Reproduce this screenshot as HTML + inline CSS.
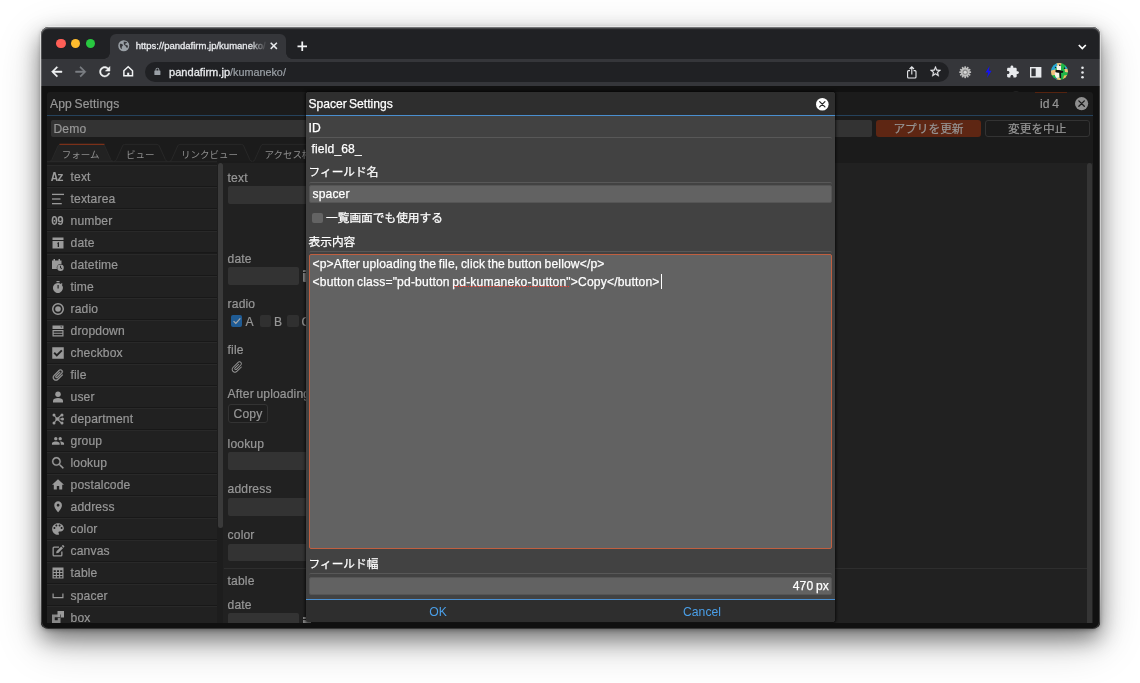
<!DOCTYPE html>
<html lang="ja">
<head>
<meta charset="utf-8">
<title>kumaneko - Spacer Settings</title>
<style>
*{box-sizing:border-box;margin:0;padding:0}
html,body{width:1140px;height:683px;overflow:hidden;background:#fff}
body{position:relative;font-family:"Liberation Sans","Noto Sans CJK JP",sans-serif;font-size:12.2px;color:#9a9a9a;line-height:1}
.abs{position:absolute}
#win{position:absolute;left:40.5px;top:27px;width:1059px;height:601.5px;border-radius:7.5px;background:#111;
 box-shadow:0 10px 22px rgba(0,0,0,.45),0 14px 45px rgba(0,0,0,.22),0 1px 4px rgba(0,0,0,.3)}
#win:before{content:"";position:absolute;left:-1px;top:-1px;right:-1px;bottom:-1px;border-radius:8.5px;border:1px solid rgba(255,255,255,.5);-webkit-mask-image:linear-gradient(#000 90%,rgba(0,0,0,0) 99%)}
#win .in{position:absolute;left:-40.5px;top:-27px;width:1140px;height:683px;will-change:transform}
/* chrome */
#tabstrip{left:40.5px;top:27px;width:1059px;height:32px;background:#202124;border-radius:7.5px 7.5px 0 0}
#toolbar{left:40.5px;top:58.7px;width:1059px;height:27.3px;background:#35363a}
#tab{left:109.6px;top:33.7px;width:176px;height:26px;background:#35363a;border-radius:6px 6px 0 0}
#tab:before,#tab:after{content:"";position:absolute;bottom:1px;width:6px;height:6px;background:radial-gradient(circle at 0 0,rgba(0,0,0,0) 5.5px,#35363a 6px)}
#tab:before{left:-6px}
#tab:after{right:-6px;background:radial-gradient(circle at 100% 0,rgba(0,0,0,0) 5.5px,#35363a 6px)}
.tl{width:9.6px;height:9.6px;border-radius:50%;top:38.8px}
#url{left:144.5px;top:61.9px;width:804.5px;height:20.2px;border-radius:10.1px;background:#202124}
.ct{color:#e8eaed;white-space:nowrap;-webkit-text-stroke:0.3px #e8eaed}
svg{display:block;overflow:visible}
/* page */
#page{left:40.5px;top:86px;width:1059px;height:537px;background:#111}
#panel{left:47px;top:92px;width:1046.200px;height:531px;background:#1b1b1b;border-radius:3px 3px 0 0}
.row{left:47px;width:170px;height:22.05px;background:#212121;border-top:1px solid #292929;border-bottom:1px solid #181818}
.row span{position:absolute;left:23.5px;top:4.3px;font-size:12.1px;letter-spacing:.15px;color:#979797;white-space:nowrap;-webkit-text-stroke:0.2px #979797}
.row svg{position:absolute;left:4.5px;top:4.2px;width:12px;height:12px;fill:#9a9a9a}
.row b{position:absolute;left:4.300px;top:5.600px;font-family:"Liberation Mono",monospace;font-weight:bold;font-size:13.400px;letter-spacing:-1.200px;transform:scaleX(.86);transform-origin:0 0;color:#9a9a9a;line-height:12px}
.lbl{font-size:12.1px;letter-spacing:.14px;word-spacing:-.9px;color:#979797;white-space:nowrap;-webkit-text-stroke:0.2px #979797}
.inp{background:#333;border-radius:2px}
/* modal */
#modal{left:306px;top:92.4px;width:528.5px;height:530px;background:#424242;border-radius:3px;box-shadow:0 0 3px 0.500px rgba(0,0,0,.7)}
.mt{color:#fff;white-space:nowrap;font-size:12.1px;letter-spacing:.14px;word-spacing:-.9px;-webkit-text-stroke:0.25px #fff}
.jp{font-family:"Noto Sans CJK JP","Liberation Sans",sans-serif;}
.mt.jp,.lbl.jp{font-size:11.7px;letter-spacing:0}
.sep{left:308.5px;width:523px;height:4px;border-top:1px solid #585858;border-radius:3px}
.minp{left:308.5px;width:523px;background:#626262;border:1px solid #555;border-radius:2px}
</style>
</head>
<body>
<div id="win"><div class="in">

<!-- browser chrome -->
<div id="tabstrip" class="abs"></div>
<div id="toolbar" class="abs"></div>
<div id="tab" class="abs"></div>
<div class="abs tl" style="left:56.2px;background:#ff5f57"></div>
<div class="abs tl" style="left:70.8px;background:#febc2e"></div>
<div class="abs tl" style="left:85.5px;background:#28c840"></div>
<div id="url" class="abs"></div>
<div class="abs ct" style="left:135.7px;top:41px;font-size:9.5px;width:130px;height:12px;overflow:hidden;-webkit-mask-image:linear-gradient(90deg,#000 114px,rgba(0,0,0,0) 131px)">https://pandafirm.jp/kumaneko/</div>
<div class="abs ct" style="left:169px;top:66.500px;font-size:11.1px">pandafirm.jp<span style="color:#9aa0a6;-webkit-text-stroke:0.2px #9aa0a6;font-size:10.800px">/kumaneko/</span></div>


<!-- toolbar icons -->
<svg class="abs" style="left:49.300px;top:64px" width="15.500" height="15.500" viewBox="0 0 24 24" fill="#f1f3f4" stroke="#f1f3f4" stroke-width=".9"><path d="M20 11H7.830l5.590-5.590L12 4l-8 8 8 8 1.410-1.410L7.830 13H20v-2z"/></svg>
<svg class="abs" style="left:73.300px;top:64px" width="15.500" height="15.500" viewBox="0 0 24 24" fill="#7c7f84" stroke="#7c7f84" stroke-width=".9"><path d="M12 4l-1.410 1.410L16.170 11H4v2h12.170l-5.580 5.590L12 20l8-8z"/></svg>
<svg class="abs" style="left:96.800px;top:64.200px" width="15.500" height="15.500" viewBox="0 0 24 24" fill="#f1f3f4" stroke="#f1f3f4" stroke-width=".8"><path d="M17.650 6.350C16.200 4.900 14.210 4 12 4c-4.420 0-7.990 3.580-7.990 8s3.570 8 7.990 8c3.730 0 6.840-2.550 7.730-6h-2.080c-.82 2.330-3.040 4-5.650 4-3.310 0-6-2.690-6-6s2.690-6 6-6c1.660 0 3.140.69 4.220 1.780L13 11h7V4l-2.350 2.350z"/></svg>
<svg class="abs" style="left:120.800px;top:64.300px" width="14.400" height="14.400" viewBox="0 0 24 24" fill="none" stroke="#f1f3f4" stroke-width="2.500"><path d="M4.800 11.200L12 4.600l7.200 6.600V19.800H4.800z" stroke-linejoin="miter"/><path d="M12 20v-5.500" stroke-width="3.400"/></svg>
<!-- lock -->
<svg class="abs" style="left:153.700px;top:67.400px" width="6.800" height="8.600" viewBox="0 0 18 22" fill="#9aa0a6"><path d="M2.500 9h13a1.500 1.500 0 0 1 1.500 1.500v9a1.500 1.500 0 0 1-1.500 1.500h-13A1.500 1.500 0 0 1 1 19.500v-9A1.500 1.500 0 0 1 2.500 9zM4 9V6.500a5 5 0 0 1 10 0V9h-2.400V6.500a2.600 2.600 0 0 0-5.200 0V9z"/></svg>
<!-- favicon globe -->
<svg class="abs" style="left:118.400px;top:40.300px" width="11.500" height="11.500" viewBox="0 0 24 24"><circle cx="12" cy="12" r="11.500" fill="#9aa0a6"/><path d="M4 8c3-1 5 0 6 2s-1 3-2 4 1 3 0 5c-3-1-5-5-4-11zM12 3c2 1 5 0 7 2-1 2-3 1-4 3s2 3 4 3 2 3 1 5c-2 1-3-1-4-3s-4-2-4-5 0-3 0-5z" fill="#35363a"/></svg>
<!-- tab close -->
<svg class="abs" style="left:270.200px;top:42.300px" width="7.600" height="7.600" viewBox="0 0 7.600 7.600"><path d="M0.700 0.700l6.200 6.200M6.900 0.700L0.700 6.900" stroke="#e8eaed" stroke-width="1.500"/></svg>
<!-- new tab plus -->
<svg class="abs" style="left:296.500px;top:41px" width="10.500" height="10.500" viewBox="0 0 10.500 10.500"><path d="M5.250 0.500v9.500M0.500 5.250h9.500" stroke="#f1f3f4" stroke-width="1.750"/></svg>
<!-- chevron -->
<svg class="abs" style="left:1078.300px;top:43.900px" width="8.600" height="6" viewBox="0 0 8.600 6"><path d="M0.800 1l3.500 3.500L7.800 1" stroke="#fff" stroke-width="1.700" fill="none"/></svg>
<!-- share -->
<svg class="abs" style="left:907.300px;top:65.500px" width="9.600" height="12.500" viewBox="0 0 9.600 12.500" fill="none" stroke="#e8eaed" stroke-width="1.100"><path d="M3 4.600H1.600a1 1 0 0 0-1 1V11a1 1 0 0 0 1 1H8a1 1 0 0 0 1-1V5.600a1 1 0 0 0-1-1H6.600M4.800 8.500V1M2.600 3l2.200-2.200L7 3"/></svg>
<!-- star -->
<svg class="abs" style="left:929.200px;top:65.300px" width="13" height="13" viewBox="0 0 24 24" fill="#e8eaed" stroke="#e8eaed" stroke-width=".6"><path d="M22 9.240l-7.190-.62L12 2 9.190 8.630 2 9.240l5.460 4.730L5.820 21 12 17.270 18.180 21l-1.630-7.030L22 9.240zM12 15.400l-3.760 2.270 1-4.280-3.320-2.880 4.380-.38L12 6.100l1.710 4.040 4.380.38-3.320 2.880 1 4.280L12 15.400z"/></svg>
<!-- gear -->
<svg class="abs" style="left:959.200px;top:65.800px" width="12.400" height="12.400" viewBox="0 0 24 24"><g fill="#bdbdbd"><circle cx="12" cy="12" r="8.500"/><g id="tth"><rect x="10.300" y="0.500" width="3.400" height="23" rx="1"/><rect x="10.300" y="0.500" width="3.400" height="23" rx="1" transform="rotate(30 12 12)"/><rect x="10.300" y="0.500" width="3.400" height="23" rx="1" transform="rotate(60 12 12)"/><rect x="10.300" y="0.500" width="3.400" height="23" rx="1" transform="rotate(90 12 12)"/><rect x="10.300" y="0.500" width="3.400" height="23" rx="1" transform="rotate(120 12 12)"/><rect x="10.300" y="0.500" width="3.400" height="23" rx="1" transform="rotate(150 12 12)"/></g></g><circle cx="12" cy="12" r="5" fill="#8a8a8a"/><circle cx="12" cy="12" r="3" fill="#d8d8d8"/></svg>
<!-- lightning -->
<svg class="abs" style="left:985px;top:66px" width="7" height="12" viewBox="0 0 7 12"><path d="M4.600 0L0.500 6.600h2.700L2 12l4.600-7.200H3.800z" fill="#1414f0"/></svg>
<!-- puzzle -->
<svg class="abs" style="left:1005.500px;top:65.200px" width="13.500" height="13.500" viewBox="0 0 24 24" fill="#e8eaed"><path d="M20.500 11H19V7c0-1.100-.9-2-2-2h-4V3.500C13 2.120 11.880 1 10.500 1S8 2.120 8 3.500V5H4c-1.100 0-1.990.9-1.990 2v3.800H3.500c1.490 0 2.700 1.210 2.700 2.700s-1.210 2.700-2.700 2.700H2V20c0 1.100.9 2 2 2h3.800v-1.500c0-1.490 1.210-2.700 2.700-2.700 1.490 0 2.700 1.210 2.700 2.700V22H17c1.100 0 2-.9 2-2v-4h1.500c1.380 0 2.500-1.120 2.500-2.500S21.880 11 20.500 11z"/></svg>
<!-- side panel -->
<svg class="abs" style="left:1030px;top:66.800px" width="11.400" height="10.600" viewBox="0 0 11.400 10.600"><rect x="0.700" y="0.700" width="10" height="9.200" fill="none" stroke="#e8eaed" stroke-width="1.400"/><rect x="5.700" y="0.700" width="5" height="9.200" fill="#e8eaed"/></svg>
<!-- avatar -->
<svg class="abs" style="left:1050.700px;top:63.400px" width="17" height="17.200" viewBox="0 0 34 34"><defs><clipPath id="avc"><circle cx="17" cy="17" r="17"/></clipPath></defs><g clip-path="url(#avc)"><rect width="34" height="34" fill="#1fb648"/><path d="M0 0h14l-2 6-4 8-8 3z" fill="#2aa5d8"/><path d="M11 0h10l-1 5-7 1z" fill="#f3c07c"/><path d="M0 15l9-2 2 5-3 6-8 1z" fill="#f3c07c"/><path d="M27 12l7-1v8l-6-1z" fill="#f3c07c"/><path d="M26 25l6-1-3 7-5 1z" fill="#f0b860"/><path d="M11 30l8-1 1 5H10z" fill="#f3c07c"/><path d="M6 31l5-2 1 5H7z" fill="#1d6fb0"/><path d="M28 6l4 2 1 4-5-1z" fill="#2aa5d8"/><path d="M11 7c1-3 8-4 9 0l0 8-8 1z" fill="#f7f3ea"/><path d="M8 18l9 0 0 11-6 1c-3-2-4-8-3-12z" fill="#f7f3ea"/><path d="M9 14.500c4-1.500 10 0 15.500 1.500l-.5 3.500c-4 .5-11 0-15-1z" fill="#111"/><path d="M16.500 18.500l3.500 0 .5 12.500-3-1z" fill="#111"/><circle cx="9" cy="8.500" r="1.400" fill="#111"/><circle cx="17.500" cy="4.500" r="1.500" fill="#111"/><circle cx="27" cy="10.500" r="1.500" fill="#111"/></g></svg>
<!-- menu dots -->
<svg class="abs" style="left:1081.200px;top:65.500px" width="3" height="13" viewBox="0 0 3 13" fill="#e8eaed"><circle cx="1.500" cy="1.700" r="1.300"/><circle cx="1.500" cy="6.500" r="1.300"/><circle cx="1.500" cy="11.300" r="1.300"/></svg>

<!-- page -->
<div id="page" class="abs"></div>
<div class="abs" style="left:1012px;top:90.500px;width:8px;height:8px;border-radius:50%;background:#222"></div>
<div id="panel" class="abs"></div>
<div class="abs" style="left:1034.500px;top:91.500px;width:32.500px;height:1px;background:#55230f"></div>
<div class="abs lbl" style="left:50px;top:98px">App Settings</div>
<div class="abs lbl" style="left:1040px;top:98px">id 4</div>
<div class="abs" style="left:47px;top:115.2px;width:1046px;height:1px;background:#25425c"></div>
<!-- app name input -->
<div class="abs inp" style="left:50.5px;top:119.8px;width:821px;height:17.6px"></div>
<div class="abs lbl" style="left:53.5px;top:122.8px">Demo</div>
<div class="abs" style="left:876px;top:119.8px;width:105px;height:17.6px;background:#5e2613;border-radius:3px"></div>
<div class="abs lbl jp" style="left:876px;top:119.8px;width:105px;height:17.6px;line-height:16.400px;text-align:center">アプリを更新</div>
<div class="abs" style="left:985px;top:119.8px;width:104.5px;height:17.6px;border:1px solid #333;border-radius:3px"></div>
<div class="abs lbl jp" style="left:985px;top:119.8px;width:104.5px;height:17.6px;line-height:16.400px;text-align:center">変更を中止</div>

<!-- tabs -->
<svg class="abs" style="left:47px;top:140px" width="300" height="24" viewBox="47 140 300 24">
 <path d="M114.2 161.3 Q115.8 161.3 116.4 159.7 L122.5 146.0 Q123.2 144.4 124.6 144.4 L157.2 144.4 Q158.6 144.4 159.3 146.0 L165.4 159.7 Q166.0 161.3 167.6 161.3" fill="#1c1c1c" stroke="#282828" stroke-width="1"/>
 <path d="M169.4 161.3 Q171.0 161.3 171.6 159.7 L177.7 146.0 Q178.4 144.4 179.8 144.4 L241.6 144.4 Q243.0 144.4 243.7 146.0 L249.8 159.7 Q250.4 161.3 252.0 161.3" fill="#1c1c1c" stroke="#282828" stroke-width="1"/>
 <path d="M252.6 161.3 Q254.2 161.3 254.8 159.7 L260.9 146.0 Q261.6 144.4 263.0 144.4 L315.6 144.4 Q317.0 144.4 317.7 146.0 L323.8 159.7 Q324.4 161.3 326.0 161.3" fill="#1c1c1c" stroke="#282828" stroke-width="1"/>
 <path d="M49.7 161.3 Q51.3 161.3 51.9 159.7 L58.0 146.0 Q58.7 144.4 60.1 144.4 L102.6 144.4 Q104.0 144.4 104.7 146.0 L110.8 159.7 Q111.4 161.3 113.0 161.3Z" fill="#222" stroke="#282828" stroke-width="1"/>
 <path d="M59.500 144.400H104.500" stroke="#7a3019" stroke-width="1.200"/>
 <path d="M47 161.800H217" stroke="#2a2a2a" stroke-width="1"/>
</svg>
<div class="abs lbl jp" style="left:61.700px;top:150px;font-size:9.500px;color:#8e8e8e;-webkit-text-stroke:0">フォーム</div>
<div class="abs lbl jp" style="left:126px;top:150px;font-size:9.500px;color:#8e8e8e;-webkit-text-stroke:0">ビュー</div>
<div class="abs lbl jp" style="left:181px;top:150px;font-size:9.500px;color:#8e8e8e;-webkit-text-stroke:0">リンクビュー</div>
<div class="abs lbl jp" style="left:264.500px;top:150px;font-size:9.500px;color:#8e8e8e;-webkit-text-stroke:0">アクセス権</div>

<!-- form area -->
<div class="abs" style="left:223px;top:162.800px;width:870px;height:460.200px;background:#212121"></div>
<div class="abs" style="left:217px;top:162.800px;width:6px;height:460.200px;background:#1d1d1d"></div>
<div class="abs" style="left:217.700px;top:163px;width:5px;height:365px;background:#3a3a3a;border-radius:2.500px"></div>
<div class="abs" style="left:1087.400px;top:163px;width:5px;height:460px;background:#353535;border-radius:2.500px 2.500px 0 0"></div>
<div class="abs row" style="top:165.30px"><b>Az</b><span>text</span></div>
<div class="abs row" style="top:187.35px"><svg viewBox="0 0 24 24"><rect x="0" y="1.500" width="24" height="2.600"/><rect x="0" y="10.700" width="17" height="2.600"/><rect x="0" y="20" width="19.500" height="2.600"/></svg><span>textarea</span></div>
<div class="abs row" style="top:209.40px"><b>09</b><span>number</span></div>
<div class="abs row" style="top:231.45px"><svg viewBox="0 0 24 24"><path d="M1 1h22v5H1zM1 8h22v15H1zM11 11.5l3-1.5v10h-2.6v-6.8l-1.4.6z" fill-rule="evenodd"/></svg><span>date</span></div>
<div class="abs row" style="top:253.50px"><svg viewBox="0 0 24 24"><path d="M3 0h3v3h7V0h3v3h3v7.2a7.6 7.6 0 0 0-9.2 9.8H0V3h3z"/><path d="M17 11a6.5 6.5 0 1 0 0 13 6.5 6.5 0 0 0 0-13zm-1 2.5h1.8v3.6l2.6 1.5-.9 1.5-3.5-2z" fill-rule="evenodd"/></svg><span>datetime</span></div>
<div class="abs row" style="top:275.55px"><svg viewBox="0 0 24 24"><path d="M9 0h6v2.4H9zM19.5 4.2l1.8 1.8-1.7 1.7A10 10 0 1 1 12 4a10 10 0 0 1 5.8 1.9zM11 8v7h2.4V8z" fill-rule="evenodd"/></svg><span>time</span></div>
<div class="abs row" style="top:297.60px"><svg viewBox="0 0 24 24"><path d="M12 0a12 12 0 1 0 0 24 12 12 0 0 0 0-24zm0 3a9 9 0 1 1 0 18 9 9 0 0 1 0-18z" fill-rule="evenodd"/><circle cx="12" cy="12" r="5.600"/></svg><span>radio</span></div>
<div class="abs row" style="top:319.65px"><svg viewBox="0 0 24 24"><path d="M1 1h22v7H1zM16.500 3l2 2.600 2-2.600z" fill-rule="evenodd"/><path d="M1 10h22v13H1zM3.300 12.300h17.400v3H3.300zM3.300 17.700h17.400v3H3.300z" fill-rule="evenodd"/></svg><span>dropdown</span></div>
<div class="abs row" style="top:341.70px"><svg viewBox="0 0 24 24"><path d="M0.500 0.500h23v23H0.500zM9.600 19.400l11.400-11.400-2.600-2.600-8.800 8.800-4-4-2.600 2.600z" fill-rule="evenodd"/></svg><span>checkbox</span></div>
<div class="abs row" style="top:363.75px"><svg viewBox="0 0 24 24"><g stroke="#9a9a9a" stroke-width=".7" transform="rotate(45 12 12) translate(-1.800 -1.800) scale(1.150)"><path d="M16.5 6v11.5c0 2.210-1.790 4-4 4s-4-1.790-4-4V5c0-1.380 1.120-2.500 2.500-2.500s2.500 1.120 2.500 2.500v10.500c0 .55-.45 1-1 1s-1-.45-1-1V6H10v9.500c0 1.380 1.120 2.500 2.500 2.500s2.500-1.120 2.500-2.500V5c0-2.210-1.790-4-4-4S7 2.790 7 5v12.500c0 3.040 2.460 5.500 5.500 5.500s5.500-2.460 5.500-5.500V6h-1.500z"/></g></svg><span>file</span></div>
<div class="abs row" style="top:385.80px"><svg viewBox="0 0 24 24"><circle cx="12" cy="6.500" r="5.500"/><path d="M2 23v-3.500c0-4 4.500-5.500 10-5.500s10 1.500 10 5.500V23z"/></svg><span>user</span></div>
<div class="abs row" style="top:407.85px"><svg viewBox="0 0 24 24"><g stroke="#9a9a9a" stroke-width="2.200" fill="none"><path d="M4 4l6 8-6 8M10 12h10M10 12l9-8M10 12l9 8"/></g><circle cx="4" cy="4" r="3"/><circle cx="4" cy="20" r="3"/><circle cx="20" cy="4" r="3"/><circle cx="20" cy="20" r="3"/><circle cx="21" cy="12" r="3"/><circle cx="10" cy="12" r="3.400"/></svg><span>department</span></div>
<div class="abs row" style="top:429.90px"><svg viewBox="0 0 24 24"><path transform="translate(-1.2 -1.500) scale(1.100)" d="M16 11c1.660 0 2.990-1.340 2.990-3S17.660 5 16 5c-1.660 0-3 1.340-3 3s1.340 3 3 3zm-8 0c1.660 0 2.990-1.340 2.990-3S9.660 5 8 5C6.340 5 5 6.340 5 8s1.340 3 3 3zm0 2c-2.330 0-7 1.170-7 3.500V19h14v-2.500c0-2.330-4.670-3.500-7-3.500zm8 0c-.29 0-.62.020-.97.050 1.160.84 1.970 1.970 1.970 3.450V19h6v-2.500c0-2.330-4.670-3.500-7-3.500z"/></svg><span>group</span></div>
<div class="abs row" style="top:451.95px"><svg viewBox="0 0 24 24"><path stroke="#9a9a9a" stroke-width=".3" transform="translate(-4 -4) scale(1.350)" d="M15.500 14h-.79l-.28-.27C15.410 12.590 16 11.110 16 9.500 16 5.910 13.090 3 9.500 3S3 5.910 3 9.500 5.910 16 9.500 16c1.610 0 3.090-.59 4.230-1.570l.27.28v.79l5 4.990L20.490 19l-4.990-5zm-6 0C7.010 14 5 11.990 5 9.500S7.010 5 9.500 5 14 7.010 14 9.500 11.990 14 9.500 14z"/></svg><span>lookup</span></div>
<div class="abs row" style="top:474.00px"><svg viewBox="0 0 24 24"><path transform="translate(-2.400 -3) scale(1.200)" d="M10 20v-6h4v6h5v-8h3L12 3 2 12h3v8z"/></svg><span>postalcode</span></div>
<div class="abs row" style="top:496.05px"><svg viewBox="0 0 24 24"><path transform="translate(-1 -1.500) scale(1.100)" d="M12 2C8.130 2 5 5.130 5 9c0 5.250 7 13 7 13s7-7.750 7-13c0-3.870-3.130-7-7-7zm0 9.500c-1.380 0-2.500-1.120-2.500-2.500s1.120-2.500 2.500-2.500 2.500 1.120 2.500 2.500-1.120 2.500-2.500 2.500z"/></svg><span>address</span></div>
<div class="abs row" style="top:518.10px"><svg viewBox="0 0 24 24"><path transform="translate(-3.600 -3.600) scale(1.300)" d="M12 3c-4.970 0-9 4.030-9 9s4.030 9 9 9c.83 0 1.500-.67 1.500-1.500 0-.39-.15-.74-.39-1.010-.23-.26-.38-.61-.38-.99 0-.83.67-1.500 1.500-1.500H16c2.760 0 5-2.240 5-5 0-4.420-4.030-8-9-8zm-5.500 9c-.83 0-1.500-.67-1.500-1.500S5.670 9 6.500 9 8 9.670 8 10.500 7.330 12 6.500 12zm3-4C8.670 8 8 7.330 8 6.500S8.670 5 9.500 5s1.500.67 1.500 1.500S10.330 8 9.500 8zm5 0c-.83 0-1.500-.67-1.500-1.500S13.670 5 14.500 5s1.500.67 1.500 1.500S15.330 8 14.500 8zm3 4c-.83 0-1.500-.67-1.500-1.500S16.670 9 17.500 9s1.500.67 1.500 1.500-.67 1.500-1.500 1.500z"/></svg><span>color</span></div>
<div class="abs row" style="top:540.15px"><svg viewBox="0 0 24 24"><path d="M4 3h10v2.600H4.600a1 1 0 0 0-1 1V19.400a1 1 0 0 0 1 1H17.400a1 1 0 0 0 1-1V13H21v7a3 3 0 0 1-3 3H4a3 3 0 0 1-3-3V6a3 3 0 0 1 3-3z"/><path d="M9 12.500L18.500 3l3.500 3.500L12.500 16 8.300 16.700zM19.700 1.800l1.100-1.100a1.400 1.400 0 0 1 2 0l1.500 1.500a1.400 1.400 0 0 1 0 2l-1.100 1.100z"/></svg><span>canvas</span></div>
<div class="abs row" style="top:562.20px"><svg viewBox="0 0 24 24"><path d="M1 1h22v22H1zM3.400 6.600v3.600h4.200V6.600zm6.500 0v3.600h4.200V6.600zm6.500 0v3.600h4.200V6.600zM3.400 12.200v3.600h4.200v-3.600zm6.500 0v3.600h4.200v-3.600zm6.500 0v3.600h4.200v-3.600zM3.400 17.800v3h4.200v-3zm6.500 0v3h4.200v-3zm6.500 0v3h4.200v-3z" fill-rule="evenodd"/></svg><span>table</span></div>
<div class="abs row" style="top:584.25px"><svg viewBox="0 0 24 24"><path d="M1 9h2.400v7h17.200V9H23v9.400H1z"/></svg><span>spacer</span></div>
<div class="abs row" style="top:606.30px"><svg viewBox="0 0 24 24"><path d="M0 7h17v17H0z" opacity=".85"/><path d="M11 0h13v13H11z"/><path d="M5.500 12.500h6v6h-6z" fill="#202020"/><path d="M11 13h6v-6" fill="none" stroke="#202020" stroke-width="1.200"/></svg><span>box</span></div>

<div class="abs lbl" style="left:227.600px;top:172.0px">text</div>
<div class="abs inp" style="left:228px;top:186.400px;width:100px;height:17.600px"></div>
<div class="abs lbl" style="left:227.600px;top:252.8px">date</div>
<div class="abs inp" style="left:228px;top:267.200px;width:70.700px;height:17.600px"></div>
<div class="abs" style="left:302.900px;top:270px;width:8px;height:2px;background:#8a8a8a;border-radius:1px 0 0 0"></div>
<div class="abs" style="left:302.900px;top:273px;width:8px;height:8.500px;background:#858585;border-radius:0 0 0 1px"></div>
<div class="abs" style="left:302.900px;top:616.500px;width:8px;height:2px;background:#8a8a8a"></div>
<div class="abs" style="left:302.900px;top:619.500px;width:8px;height:4px;background:#858585"></div>
<div class="abs lbl" style="left:227.600px;top:298.1px">radio</div>
<div class="abs" style="left:230.700px;top:315px;width:11.800px;height:11.800px;background:#1f5b94;border-radius:2px"></div>
<svg class="abs" style="left:230.700px;top:315px" width="11.800" height="11.800" viewBox="0 0 12 12"><path d="M2.600 6.200l2.300 2.300 4.600-5" fill="none" stroke="#a9a9a9" stroke-width="1.300"/></svg>
<div class="abs lbl" style="left:245.500px;top:315.500px">A</div>
<div class="abs" style="left:259.700px;top:315px;width:11.800px;height:11.800px;background:#303030;border-radius:2px"></div>
<div class="abs lbl" style="left:274px;top:315.500px">B</div>
<div class="abs" style="left:287.300px;top:315px;width:11.800px;height:11.800px;background:#303030;border-radius:2px"></div>
<div class="abs lbl" style="left:301.500px;top:315.500px">C</div>
<div class="abs lbl" style="left:227.600px;top:343.8px">file</div>
<svg class="abs" style="left:230px;top:359.500px;fill:#9a9a9a" width="14" height="14" viewBox="0 0 24 24"><g transform="rotate(45 12 12)"><path d="M16.500 6v11.500c0 2.210-1.790 4-4 4s-4-1.790-4-4V5c0-1.380 1.120-2.500 2.500-2.500s2.500 1.120 2.500 2.500v10.500c0 .55-.45 1-1 1s-1-.45-1-1V6H10v9.500c0 1.380 1.120 2.500 2.500 2.500s2.500-1.120 2.500-2.500V5c0-2.210-1.790-4-4-4S7 2.790 7 5v12.500c0 3.040 2.460 5.500 5.500 5.500s5.500-2.460 5.500-5.500V6h-1.500z"/></g></svg>
<div class="abs lbl" style="left:227.600px;top:387.8px">After uploading the file, click the button bellow</div>
<div class="abs" style="left:228px;top:404.400px;width:40px;height:18.200px;border:1px solid #333;border-radius:3px;background:#1e1e1e"></div>
<div class="abs lbl" style="left:228px;top:404.400px;width:40px;height:18.200px;line-height:20.600px;text-align:center">Copy</div>
<div class="abs lbl" style="left:227.600px;top:437.5px">lookup</div>
<div class="abs inp" style="left:228px;top:452.400px;width:100px;height:17.600px"></div>
<div class="abs lbl" style="left:227.600px;top:483.2px">address</div>
<div class="abs inp" style="left:228px;top:498px;width:100px;height:17.600px"></div>
<div class="abs lbl" style="left:227.600px;top:528.8px">color</div>
<div class="abs inp" style="left:228px;top:543.700px;width:100px;height:17.600px"></div>
<div class="abs" style="left:224px;top:568px;width:863px;height:1px;background:#2e2e2e"></div>
<div class="abs lbl" style="left:227.600px;top:575.0px">table</div>
<div class="abs lbl" style="left:227.600px;top:598.5px">date</div>
<div class="abs inp" style="left:228px;top:613px;width:70.700px;height:10px;border-radius:2px 2px 0 0"></div>

<!-- close icon of panel -->
<svg class="abs" style="left:1074.700px;top:97px" width="13.200" height="13.200" viewBox="0 0 24 24"><circle cx="12" cy="12" r="12" fill="#8f8f8f"/><path d="M7 7l10 10M17 7L7 17" stroke="#1b1b1b" stroke-width="2.400" stroke-linecap="round"/></svg>

<!-- modal -->
<div id="modal" class="abs"></div>
<div class="abs" style="left:306px;top:92.400px;width:528.500px;height:23.200px;background:#2e2e2e;border-radius:3px 3px 0 0"></div>
<div class="abs" style="left:306px;top:115.300px;width:528.500px;height:1.200px;background:#4a8fd0"></div>
<div class="abs mt" style="left:308.500px;top:98px;letter-spacing:0;word-spacing:-1.200px">Spacer Settings</div>
<svg class="abs" style="left:816.300px;top:97.500px" width="12.600" height="12.600" viewBox="0 0 24 24"><circle cx="12" cy="12" r="12" fill="#fff"/><path d="M7 7l10 10M17 7L7 17" stroke="#2a2a2a" stroke-width="2.400" stroke-linecap="round"/></svg>

<div class="abs mt" style="left:308.500px;top:121.500px">ID</div>
<div class="abs sep" style="top:136.500px"></div>
<div class="abs mt" style="left:311.500px;top:142.500px">field_68_</div>
<div class="abs mt jp" style="left:308.500px;top:165px">フィールド名</div>
<div class="abs sep" style="top:181.700px"></div>
<div class="abs minp" style="top:184.800px;height:18px"></div>
<div class="abs mt" style="left:312.500px;top:188px">spacer</div>
<div class="abs" style="left:312px;top:212.500px;width:10.500px;height:10.500px;background:#636363;border-radius:2px"></div>
<div class="abs mt jp" style="left:326px;top:211.200px">一覧画面でも使用する</div>
<div class="abs mt jp" style="left:308.500px;top:235px">表示内容</div>
<div class="abs sep" style="top:251.300px"></div>
<div class="abs" style="left:308.500px;top:254.200px;width:523px;height:295px;background:#626262;border:1.300px solid #c05f40;border-radius:2px"></div>
<div class="abs mt" style="left:312.500px;top:258px">&lt;p&gt;After uploading the file, click the button bellow&lt;/p&gt;</div>
<div class="abs mt" style="left:312.500px;top:275.500px;letter-spacing:.17px">&lt;button class="pd-button pd-kumaneko-button"&gt;Copy&lt;/button&gt;</div>
<div class="abs" style="left:454px;top:286.300px;width:114.500px;height:0;border-top:1.500px dotted #f2382c"></div>
<div class="abs" style="left:660.800px;top:274px;width:1px;height:15px;background:#fff"></div>
<div class="abs mt jp" style="left:308.500px;top:557.200px">フィールド幅</div>
<div class="abs sep" style="top:573.200px"></div>
<div class="abs minp" style="top:577.400px;height:17.200px"></div>
<div class="abs mt" style="left:700px;width:129px;text-align:right;top:580px">470 px</div>
<div class="abs" style="left:306px;top:598.600px;width:528.500px;height:1.200px;background:#4a8fd0"></div>
<div class="abs" style="left:306px;top:599.800px;width:528.500px;height:22.600px;background:#2e2e2e;border-radius:0 0 3px 3px"></div>
<div class="abs" style="left:306px;top:605.500px;width:264px;text-align:center;color:#4a9fe8;font-size:12.200px">OK</div>
<div class="abs" style="left:570px;top:605.500px;width:264px;text-align:center;color:#4a9fe8;font-size:12.200px">Cancel</div>

<!-- bottom strip of window -->
<div class="abs" style="left:40.500px;top:622.600px;width:1059px;height:5.900px;background:#101010;border-radius:0 0 7.500px 7.500px"></div>
<div class="abs" style="left:40.500px;top:27px;width:1059px;height:601.500px;border-radius:7.500px;box-shadow:inset 0 0 0 1px rgba(255,255,255,.16),inset 0 1.500px 1.500px rgba(255,255,255,.3)"></div>
</div></div>
</body>
</html>
